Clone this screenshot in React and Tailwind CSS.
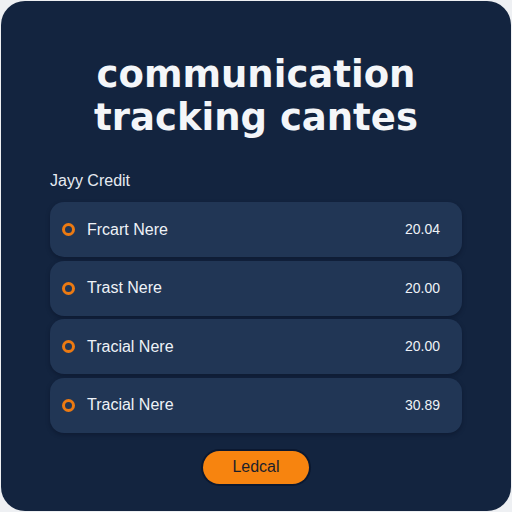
const rows = [
  { name: 'Frcart Nere', value: '20.04' },
  { name: 'Trast Nere', value: '20.00' },
  { name: 'Tracial Nere', value: '20.00' },
  { name: 'Tracial Nere', value: '30.89' },
];

const Row = ({ name, value }) => (
  <div className="flex items-center h-[55px] rounded-[14px] bg-[#213655] pl-[12px] pr-[22px] shadow-[0_2px_4px_rgba(5,12,28,0.35)]">
    <span className="w-[13px] h-[13px] rounded-full border-[3px] border-[#ec7a12] shrink-0" />
    <span className="ml-[12px] text-[16px] text-[#eef2f7]">{name}</span>
    <span className="ml-auto text-[14px] text-[#eef2f7]">{value}</span>
  </div>
);

export default function App() {
  return (
    <div className="w-[512px] h-[512px] bg-[#eef0f3] p-[1px] font-['Liberation_Sans',_Arial,_sans-serif]">
      <div className="w-full h-full rounded-[24px] bg-[#13243f] flex flex-col">
        <h1 className="mt-[52px] text-center text-[37px] leading-[43px] font-bold text-[#f4f6f9] font-['DejaVu_Sans',_sans-serif]">
          communication
          <br />
          tracking cantes
        </h1>

        <p className="mt-[30px] ml-[49px] text-[16px] text-[#e6ebf2]">Jayy Credit</p>

        <div className="mt-[9px] mx-[49px] flex flex-col gap-[3.5px]">
          {rows.map((r, idx) => (
            <Row key={idx} name={r.name} value={r.value} />
          ))}
        </div>

        <div className="mt-[18px] flex justify-center">
          <button className="w-[106px] h-[33px] rounded-full bg-[#f7840f] text-[16px] text-[#1c1f2b] ring-2 ring-[#0b1830]">
            Ledcal
          </button>
        </div>
      </div>
    </div>
  );
}
